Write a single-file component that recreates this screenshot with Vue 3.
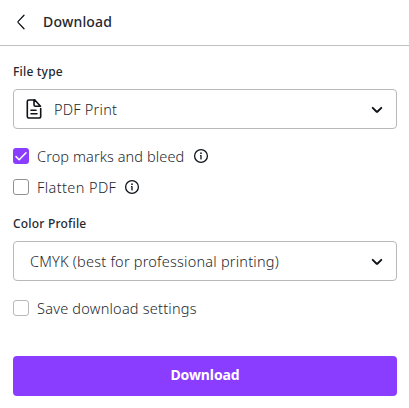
<script setup>
import { ref } from 'vue';

const options = ref([
  { id: 'crop', label: 'Crop marks and bleed', checked: true },
  { id: 'flatten', label: 'Flatten PDF', checked: false }
]);
const saveSettings = ref(false);
</script>

<template>
  <div class="panel">
    <header class="panel-header">
      <button class="back" aria-label="Back">
        <svg width="16" height="16" viewBox="0 0 16 16">
          <path d="M11 1.2 5.2 7.4a.9.9 0 0 0 0 1.2L11 14.8" />
        </svg>
      </button>
      <h1 class="title">Download</h1>
    </header>

    <main class="content">
      <div class="label file-label">File type</div>
      <button class="select">
        <svg class="file-icon" width="18" height="22" viewBox="0 0 18 22">
          <path d="M9.8 2H3.8A1.500 1.500 0 0 0 2.300 3.500v15A1.500 1.500 0 0 0 3.800 20h10.400a1.500 1.500 0 0 0 1.500-1.500V10.500" />
          <path d="M9 2v4.700A1.500 1.500 0 0 0 10.500 8.200H15.500L9.800 2M6 12.200h5M6 15.800h6" />
        </svg>
        <span class="value file-value">PDF Print</span>
        <svg class="chevron" width="12" height="8" viewBox="0 0 12 8">
          <path d="m1.700 1.800 3.700 3.700a.8.8 0 0 0 1.200 0l3.700-3.700" />
        </svg>
      </button>

      <div class="options">
        <div v-for="option in options" :key="option.id" class="option" @click="option.checked = !option.checked">
          <span class="box" :class="{ checked: option.checked }">
            <svg v-if="option.checked" width="16" height="16" viewBox="0 0 16 16">
              <path d="m3 8.600 3.200 3.100L13 4.800" />
            </svg>
          </span>
          <span class="option-text" :class="option.id">{{ option.label }}</span>
          <svg class="info" width="16" height="16" viewBox="0 0 16 16">
            <circle class="ring" cx="8" cy="8" r="6.400" />
            <circle class="dot" cx="8" cy="5.200" r=".85" />
            <path d="M7.500 7.600H8v3.300" />
          </svg>
        </div>
      </div>

      <div class="label color-label">Color Profile</div>
      <button class="select">
        <span class="value color-value">CMYK (best for professional printing)</span>
        <svg class="chevron" width="12" height="8" viewBox="0 0 12 8">
          <path d="m1.700 1.800 3.700 3.700a.8.8 0 0 0 1.200 0l3.700-3.700" />
        </svg>
      </button>

      <div class="option save" @click="saveSettings = !saveSettings">
        <span class="box" :class="{ checked: saveSettings, light: !saveSettings }">
          <svg v-if="saveSettings" width="16" height="16" viewBox="0 0 16 16">
            <path d="m3 8.600 3.200 3.100L13 4.800" />
          </svg>
        </span>
        <span class="option-text save-text">Save download settings</span>
      </div>

      <button class="download">Download</button>
    </main>
  </div>
</template>

<style>
body { background: #fff; }
</style>

<style scoped>
.panel {
  height: 408px;
  box-sizing: border-box;
  overflow: hidden;
  background: #fff;
  color: #24282e;
  font-family: 'Noto Sans', sans-serif;
}

button {
  color: inherit;
  font-family: inherit;
  cursor: pointer;
}

svg {
  display: block;
  flex: none;
  fill: none;
  stroke: #0e1318;
  stroke-linecap: round;
  stroke-linejoin: round;
}

.panel-header {
  display: flex;
  align-items: center;
  height: 46px;
  padding: 0 13px 2px;
  box-sizing: border-box;
  border-bottom: 1px solid #bfc0c2;
}

.back { padding: 0; border: 0; background: none; }
.back svg { stroke-width: 1.3; }

.title {
  margin: 0 0 0 14px;
  font-size: 14px;
  line-height: 20px;
  font-weight: 500;
  letter-spacing: 0.2px;
}

.content { padding: 16px 12px 0 13px; }

.label {
  height: 20px;
  font-size: 12px;
  line-height: 20px;
  font-weight: 500;
  letter-spacing: 0.2px;
}
.file-label { margin-bottom: 7px; }
.color-label { margin: 17px 0 7px; }

.select {
  display: flex;
  align-items: center;
  width: 100%;
  height: 40px;
  padding: 0 13px 0 11px;
  box-sizing: border-box;
  border: 1px solid #b8b9bb;
  border-radius: 4px;
  background: #fff;
}

.file-icon { stroke-width: 1.6; }
.chevron { margin: 2px 0 0 auto; stroke-width: 1.9; }

.value,
.option-text {
  padding-bottom: 1px;
  color: #24282e;
  font-size: 14.5px;
  line-height: 20px;
  font-weight: 300;
  letter-spacing: 0.22px;
  white-space: nowrap;
}
.file-value { margin-left: 11px; }
.color-value { margin-left: 5px; }

.options {
  display: flex;
  flex-direction: column;
  gap: 11px;
  margin-top: 17px;
}

.option {
  display: flex;
  align-items: center;
  height: 20px;
}

.box {
  width: 16px;
  height: 16px;
  flex: none;
  box-sizing: border-box;
  border: 1px solid #8f9195;
  border-radius: 3px;
}
.box.light { border-color: #b8b9bb; }
.box.checked { border: 0; background: #8b3dff; }
.box svg { stroke: #fff; stroke-width: 1.5; }

.option-text { margin-left: 8px; }
.crop { margin-right: 1px; letter-spacing: 0.1px; }
.flatten { letter-spacing: 0.4px; }
.info { margin-left: 8px; stroke-width: 1.3; }
.info .dot { fill: #0e1318; stroke: none; }

.save { margin-top: 17px; }

.download {
  display: block;
  width: 100%;
  height: 40px;
  margin-top: 38px;
  padding: 0 0 2px;
  border: 0;
  border-radius: 4px;
  background: #8b3dff;
  color: #fff;
  font-size: 14px;
  line-height: 20px;
  font-weight: 700;
  letter-spacing: -0.1px;
}
</style>
